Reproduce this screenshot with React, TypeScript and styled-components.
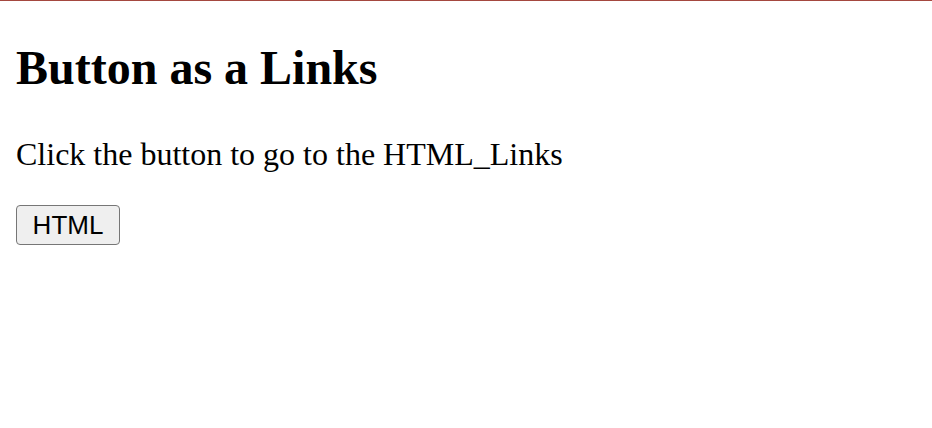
import React from 'react';
import styled, { createGlobalStyle } from 'styled-components';

const GlobalStyle = createGlobalStyle`
  html, body {
    margin: 0;
    padding: 0;
    background: #ffffff;
  }
  body {
    font-family: 'Liberation Serif', 'Times New Roman', serif;
    color: #000000;
  }
`;

const Page = styled.div`
  border-top: 1px solid #a4483f;
  padding: 0 16px;
  display: flex;
  flex-direction: column;
  align-items: flex-start;
`;

const Heading = styled.h2`
  font-size: 48px;
  font-weight: bold;
  margin: 40px 0 0;
  line-height: 53px;
`;

const Text = styled.p`
  font-size: 32px;
  margin: 43px 0 0;
  line-height: 35px;
`;

const LinkButton = styled.button`
  margin-top: 33px;
  width: 104px;
  height: 40px;
  padding: 0;
  background: #efefef;
  border: 1px solid #767676;
  border-radius: 4px;
  font-family: 'Liberation Sans', Arial, Helvetica, sans-serif;
  font-size: 26px;
  color: #000000;
  cursor: pointer;
`;

export default function App() {
  return (
    <>
      <GlobalStyle />
      <Page>
        <Heading>Button as a Links</Heading>
        <Text>Click the button to go to the HTML_Links</Text>
        <LinkButton type="button">HTML</LinkButton>
      </Page>
    </>
  );
}
